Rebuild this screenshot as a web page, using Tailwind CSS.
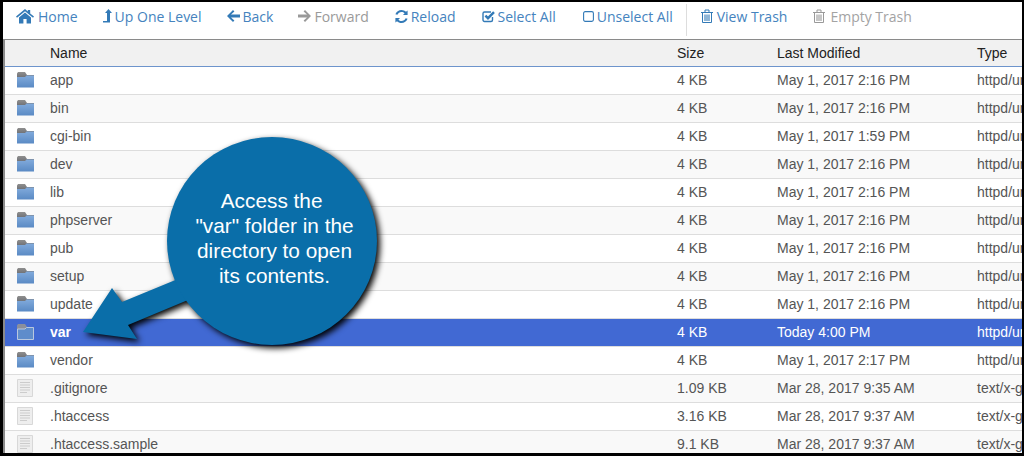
<!DOCTYPE html>
<html lang="en">
<head>
    <meta charset="UTF-8">
    <title>File Manager</title>
    <script src="https://cdn.jsdelivr.net/npm/@tailwindcss/browser@4"></script>
</head>
<body class="bg-black">
    <div class="relative w-[1024px] h-[456px] overflow-hidden bg-black">
        <div class="absolute left-[3px] top-[2px] w-[1019px] h-[451px] bg-white overflow-hidden">
            <!-- Toolbar -->
            <div class="flex items-center h-[37px] pb-[9px] pl-[13px] gap-[26px] font-['Open_Sans',sans-serif] text-[14px] text-[#4583be] whitespace-nowrap">
                <a class="flex items-center gap-[4px]">
                    <svg class="w-[18px] h-[15px]" viewBox="0 0 18 15" fill="#337ab7"><path d="M9 0 L11.8 2.4V1h2.4v3.4L18 7.6 17 8.8 9 2.2 1 8.8 0 7.6z"/><path d="M9 3.4 15 8.4V14.6H10.6V10H7.4V14.6H3V8.4z"/></svg>
                    Home
                </a>
                <a class="flex items-center gap-[3px] -ml-px">
                    <svg class="w-[9px] h-[14px]" viewBox="0 0 9 14" fill="#337ab7"><path d="M5.5 0 9 4H7V13.5H0L0 12H4V4H2z"/></svg>
                    Up One Level
                </a>
                <a class="flex items-center gap-[3px] -ml-px">
                    <svg class="w-[13px] h-[12px]" viewBox="0 0 13 12" fill="#337ab7"><path d="M6 0 7.4 1.4 4 4.6H13V7.4H4L7.4 10.6 6 12 0 6z"/></svg>
                    Back
                </a>
                <a class="flex items-center gap-[3px] -ml-px text-[#9a9a9a]">
                    <svg class="w-[13px] h-[12px]" viewBox="0 0 13 12" fill="#999"><path d="M7 0 5.6 1.4 9 4.6H0V7.4H9L5.6 10.6 7 12 13 6z"/></svg>
                    Forward
                </a>
                <a class="flex items-center gap-[3px]">
                    <svg class="w-[13px] h-[13px]" viewBox="0 0 13 13" fill="#337ab7"><path d="M6.5 0C8.2 0 9.8.7 11 1.8L12.6.4V5H8L9.6 3.3C8.8 2.5 7.7 2 6.5 2 4.7 2 3.1 3.1 2.4 4.8L.4 4.3C1.3 1.8 3.7 0 6.5 0z"/><path d="M6.5 13C4.8 13 3.2 12.3 2 11.2L.4 12.6V8H5L3.4 9.7C4.2 10.5 5.3 11 6.5 11 8.3 11 9.9 9.9 10.6 8.2L12.6 8.7C11.7 11.2 9.3 13 6.5 13z"/></svg>
                    Reload
                </a>
                <a class="flex items-center gap-[2px]">
                    <svg class="w-[14px] h-[13px]" viewBox="0 0 14 13"><path d="M10.5 7v3a1.5 1.5 0 0 1-1.5 1.5H2.5A1.5 1.5 0 0 1 1 10V3.5A1.5 1.5 0 0 1 2.5 2H9" fill="none" stroke="#337ab7" stroke-width="1.4"/><path d="M3.4 5.6 6 8.2 12 2.2" fill="none" stroke="#337ab7" stroke-width="2.4"/></svg>
                    Select All
                </a>
                <a class="flex items-center gap-[3px] ml-px">
                    <svg class="w-[11px] h-[11px]" viewBox="0 0 11 11"><rect x=".6" y=".6" width="9.8" height="9.8" rx="1.6" fill="none" stroke="#337ab7" stroke-width="1.1"/></svg>
                    Unselect All
                </a>
                <div class="w-px h-[32px] bg-[#ddd] -ml-[13px] -mr-[12px] mt-[7px]"></div>
                <a class="flex items-center gap-[4px]">
                    <svg class="w-[12px] h-[14px]" viewBox="0 0 12 14" fill="none" stroke="#337ab7"><path d="M0 3.5H12M4 3V1H8V3" stroke-width="1"/><path d="M1.5 4V13.5H10.5V4" stroke-width="1"/><path d="M4 5.5V12M6 5.5V12M8 5.5V12" stroke-width="1.1"/></svg>
                    View Trash
                </a>
                <a class="flex items-center gap-[5px] text-[#a3a3a3]">
                    <svg class="w-[12px] h-[14px]" viewBox="0 0 12 14" fill="none" stroke="#999"><path d="M0 3.5H12M4 3V1H8V3" stroke-width="1"/><path d="M1.5 4V13.5H10.5V4" stroke-width="1"/><path d="M4 5.5V12M6 5.5V12M8 5.5V12" stroke-width="1.1"/></svg>
                    Empty Trash
                </a>
            </div>

            <!-- File table -->
            <div class="border-l-2 border-t border-[#8a8a8a] h-[414px] overflow-hidden font-['Liberation_Sans',sans-serif] text-[14px] text-[#555]">
                <table class="table-fixed w-[1027px]">
                    <colgroup>
                        <col class="w-[37px]"><col class="w-[627px]"><col class="w-[100px]"><col class="w-[200px]"><col class="w-[63px]">
                    </colgroup>
                    <thead>
                        <tr class="h-[26px] bg-[#f1f1f1] border-b border-[#6d94cc] text-[#222] text-left">
                            <th></th>
                            <th class="font-normal px-2 pt-[2px]">Name</th>
                            <th class="font-normal px-2 pt-[2px]">Size</th>
                            <th class="font-normal px-2 pt-[2px]">Last Modified</th>
                            <th class="font-normal px-2 pt-[2px]">Type</th>
                        </tr>
                    </thead>
                    <tbody id="rows"></tbody>
                </table>
            </div>
        </div>

        <!-- Callout -->
        <svg class="absolute left-0 top-0 w-[1024px] h-[456px] drop-shadow-[3px_3px_3px_rgba(0,0,0,1)]" viewBox="0 0 1024 456" fill="#0a6ea9">
            <path d="M83 332 112 288 122 302 190 274 200 295 128 325 137 339z"/>
            <ellipse cx="272" cy="241" rx="105" ry="104"/>
        </svg>
        <div class="absolute left-[167px] top-[188px] w-[215px] text-center text-white text-[20.8px] leading-[25px] font-['Liberation_Sans',sans-serif]">
            Access the&nbsp;<br>"var" folder in the<br>directory to open<br>its contents.
        </div>
    </div>
    <svg class="absolute w-0 h-0">
        <defs>
            <linearGradient id="body" x1="0" y1="0" x2="0" y2="1"><stop offset="0" stop-color="#82abdc"/><stop offset="1" stop-color="#5a8ac4"/></linearGradient>
            <linearGradient id="tab" x1="0" y1="0" x2="0" y2="1"><stop offset="0" stop-color="#8f8f8f"/><stop offset="1" stop-color="#66686e"/></linearGradient>
        </defs>
    </svg>
    <script>
        var folder = '<svg class="w-[17px] h-[16px]" viewBox="0 0 17 16"><path d="M0 1.5 1 0H8L10 3H17V7H0z" fill="url(#tab)"/><path d="M0 5 8 5 9.5 3.5H17V15.5H0z" fill="url(#body)"/></svg>';
        var folderOpen = '<svg class="w-[17px] h-[16px]" viewBox="0 0 17 16"><path d="M0 1.5 1 0H8L10 3H17V7H0z" fill="#8b8f9c"/><path d="M.5 5 8 5 9.5 3.5H16.5V15.5H.5z" fill="#5f8ccb" stroke="#b9c7de"/></svg>';
        var file = '<svg class="w-[16px] h-[18px]" viewBox="0 0 16 18"><path d="M.5.5H15.5V17.5H.5z" fill="#eeeeee" stroke="#d8d8d8"/><path d="M3 3.5H13M3 6H13M3 8.5H13M3 11H13M3 13.5H10" stroke="#cccccc"/></svg>';
        var data = [
            ['app','4 KB','May 1, 2017 2:16 PM','httpd/unix-directory'],
            ['bin','4 KB','May 1, 2017 2:16 PM','httpd/unix-directory'],
            ['cgi-bin','4 KB','May 1, 2017 1:59 PM','httpd/unix-directory'],
            ['dev','4 KB','May 1, 2017 2:16 PM','httpd/unix-directory'],
            ['lib','4 KB','May 1, 2017 2:16 PM','httpd/unix-directory'],
            ['phpserver','4 KB','May 1, 2017 2:16 PM','httpd/unix-directory'],
            ['pub','4 KB','May 1, 2017 2:16 PM','httpd/unix-directory'],
            ['setup','4 KB','May 1, 2017 2:16 PM','httpd/unix-directory'],
            ['update','4 KB','May 1, 2017 2:16 PM','httpd/unix-directory'],
            ['var','4 KB','Today 4:00 PM','httpd/unix-directory'],
            ['vendor','4 KB','May 1, 2017 2:17 PM','httpd/unix-directory'],
            ['.gitignore','1.09 KB','Mar 28, 2017 9:35 AM','text/x-generic'],
            ['.htaccess','3.16 KB','Mar 28, 2017 9:37 AM','text/x-generic'],
            ['.htaccess.sample','9.1 KB','Mar 28, 2017 9:37 AM','text/x-generic']
        ];
        var html = '';
        data.forEach(function (r, i) {
            var cls = r[0] === 'var' ? 'bg-[#4169d3] text-white font-semibold' : (i % 2 ? 'bg-[#f9f9f9]' : 'bg-white');
            var icon = r[0] === 'var' ? folderOpen : (i > 10 ? file : folder);
            html += '<tr class="h-[28px] border-b border-[#ddd] ' + cls + '">'
                + '<td class="pl-[12px]">' + icon + '</td>'
                + '<td class="px-2">' + r[0] + '</td>'
                + '<td class="px-2 font-normal">' + r[1] + '</td>'
                + '<td class="px-2 font-normal">' + r[2] + '</td>'
                + '<td class="px-2 font-normal whitespace-nowrap">' + r[3] + '</td></tr>';
        });
        document.getElementById('rows').innerHTML = html;
    </script>
</body>
</html>
